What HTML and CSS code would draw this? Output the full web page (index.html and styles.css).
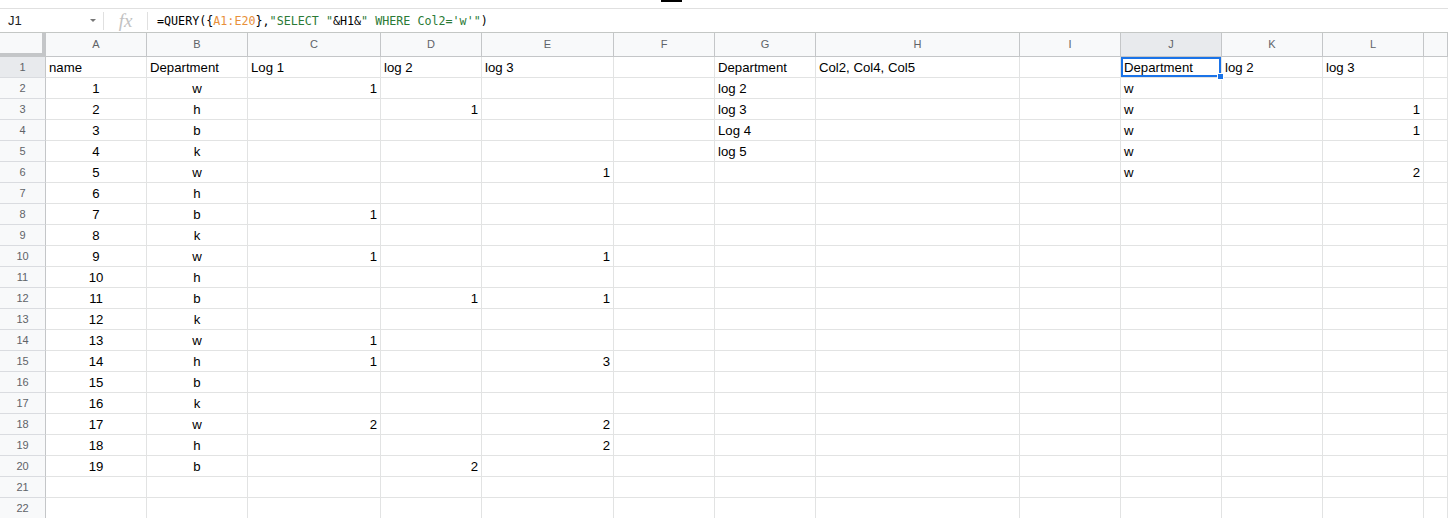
FILE: index.html
```html
<!DOCTYPE html>
<html lang="en">
<head>
<meta charset="utf-8">
<title>Sheet</title>
<link rel="stylesheet" href="styles.css">
</head>
<body>
<div class="topbar"><div class="mark"></div></div>
<div class="fbar">
  <div class="namebox"><span class="ref">J1</span><span class="caret"></span></div>
  <div class="sep"></div>
  <div class="fx">fx</div>
  <div class="sep"></div>
  <div class="formula">=QUERY({<span class="rng">A1:E20</span>},<span class="str">"SELECT "</span>&amp;H1&amp;<span class="str">" WHERE Col2='w'"</span>)</div>
</div>
<div class="sheet">
  <div class="hdr">
    <div class="corner"></div><div class="ch">A</div><div class="ch">B</div><div class="ch">C</div><div class="ch">D</div><div class="ch">E</div><div class="ch">F</div><div class="ch">G</div><div class="ch">H</div><div class="ch">I</div><div class="ch sel">J</div><div class="ch">K</div><div class="ch">L</div><div class="ch"></div>
  </div>
  <div class="r"><div class="rh sel">1</div><div class="c">name</div><div class="c">Department</div><div class="c">Log 1</div><div class="c">log 2</div><div class="c">log 3</div><div class="c"></div><div class="c">Department</div><div class="c">Col2, Col4, Col5</div><div class="c"></div><div class="c active">Department<span class="selbox"></span><span class="handle"></span></div><div class="c">log 2</div><div class="c">log 3</div><div class="c"></div></div>
  <div class="r"><div class="rh">2</div><div class="c ctr">1</div><div class="c ctr">w</div><div class="c num">1</div><div class="c"></div><div class="c"></div><div class="c"></div><div class="c">log 2</div><div class="c"></div><div class="c"></div><div class="c">w</div><div class="c"></div><div class="c"></div><div class="c"></div></div>
  <div class="r"><div class="rh">3</div><div class="c ctr">2</div><div class="c ctr">h</div><div class="c"></div><div class="c num">1</div><div class="c"></div><div class="c"></div><div class="c">log 3</div><div class="c"></div><div class="c"></div><div class="c">w</div><div class="c"></div><div class="c num">1</div><div class="c"></div></div>
  <div class="r"><div class="rh">4</div><div class="c ctr">3</div><div class="c ctr">b</div><div class="c"></div><div class="c"></div><div class="c"></div><div class="c"></div><div class="c">Log 4</div><div class="c"></div><div class="c"></div><div class="c">w</div><div class="c"></div><div class="c num">1</div><div class="c"></div></div>
  <div class="r"><div class="rh">5</div><div class="c ctr">4</div><div class="c ctr">k</div><div class="c"></div><div class="c"></div><div class="c"></div><div class="c"></div><div class="c">log 5</div><div class="c"></div><div class="c"></div><div class="c">w</div><div class="c"></div><div class="c"></div><div class="c"></div></div>
  <div class="r"><div class="rh">6</div><div class="c ctr">5</div><div class="c ctr">w</div><div class="c"></div><div class="c"></div><div class="c num">1</div><div class="c"></div><div class="c"></div><div class="c"></div><div class="c"></div><div class="c">w</div><div class="c"></div><div class="c num">2</div><div class="c"></div></div>
  <div class="r"><div class="rh">7</div><div class="c ctr">6</div><div class="c ctr">h</div><div class="c"></div><div class="c"></div><div class="c"></div><div class="c"></div><div class="c"></div><div class="c"></div><div class="c"></div><div class="c"></div><div class="c"></div><div class="c"></div><div class="c"></div></div>
  <div class="r"><div class="rh">8</div><div class="c ctr">7</div><div class="c ctr">b</div><div class="c num">1</div><div class="c"></div><div class="c"></div><div class="c"></div><div class="c"></div><div class="c"></div><div class="c"></div><div class="c"></div><div class="c"></div><div class="c"></div><div class="c"></div></div>
  <div class="r"><div class="rh">9</div><div class="c ctr">8</div><div class="c ctr">k</div><div class="c"></div><div class="c"></div><div class="c"></div><div class="c"></div><div class="c"></div><div class="c"></div><div class="c"></div><div class="c"></div><div class="c"></div><div class="c"></div><div class="c"></div></div>
  <div class="r"><div class="rh">10</div><div class="c ctr">9</div><div class="c ctr">w</div><div class="c num">1</div><div class="c"></div><div class="c num">1</div><div class="c"></div><div class="c"></div><div class="c"></div><div class="c"></div><div class="c"></div><div class="c"></div><div class="c"></div><div class="c"></div></div>
  <div class="r"><div class="rh">11</div><div class="c ctr">10</div><div class="c ctr">h</div><div class="c"></div><div class="c"></div><div class="c"></div><div class="c"></div><div class="c"></div><div class="c"></div><div class="c"></div><div class="c"></div><div class="c"></div><div class="c"></div><div class="c"></div></div>
  <div class="r"><div class="rh">12</div><div class="c ctr">11</div><div class="c ctr">b</div><div class="c"></div><div class="c num">1</div><div class="c num">1</div><div class="c"></div><div class="c"></div><div class="c"></div><div class="c"></div><div class="c"></div><div class="c"></div><div class="c"></div><div class="c"></div></div>
  <div class="r"><div class="rh">13</div><div class="c ctr">12</div><div class="c ctr">k</div><div class="c"></div><div class="c"></div><div class="c"></div><div class="c"></div><div class="c"></div><div class="c"></div><div class="c"></div><div class="c"></div><div class="c"></div><div class="c"></div><div class="c"></div></div>
  <div class="r"><div class="rh">14</div><div class="c ctr">13</div><div class="c ctr">w</div><div class="c num">1</div><div class="c"></div><div class="c"></div><div class="c"></div><div class="c"></div><div class="c"></div><div class="c"></div><div class="c"></div><div class="c"></div><div class="c"></div><div class="c"></div></div>
  <div class="r"><div class="rh">15</div><div class="c ctr">14</div><div class="c ctr">h</div><div class="c num">1</div><div class="c"></div><div class="c num">3</div><div class="c"></div><div class="c"></div><div class="c"></div><div class="c"></div><div class="c"></div><div class="c"></div><div class="c"></div><div class="c"></div></div>
  <div class="r"><div class="rh">16</div><div class="c ctr">15</div><div class="c ctr">b</div><div class="c"></div><div class="c"></div><div class="c"></div><div class="c"></div><div class="c"></div><div class="c"></div><div class="c"></div><div class="c"></div><div class="c"></div><div class="c"></div><div class="c"></div></div>
  <div class="r"><div class="rh">17</div><div class="c ctr">16</div><div class="c ctr">k</div><div class="c"></div><div class="c"></div><div class="c"></div><div class="c"></div><div class="c"></div><div class="c"></div><div class="c"></div><div class="c"></div><div class="c"></div><div class="c"></div><div class="c"></div></div>
  <div class="r"><div class="rh">18</div><div class="c ctr">17</div><div class="c ctr">w</div><div class="c num">2</div><div class="c"></div><div class="c num">2</div><div class="c"></div><div class="c"></div><div class="c"></div><div class="c"></div><div class="c"></div><div class="c"></div><div class="c"></div><div class="c"></div></div>
  <div class="r"><div class="rh">19</div><div class="c ctr">18</div><div class="c ctr">h</div><div class="c"></div><div class="c"></div><div class="c num">2</div><div class="c"></div><div class="c"></div><div class="c"></div><div class="c"></div><div class="c"></div><div class="c"></div><div class="c"></div><div class="c"></div></div>
  <div class="r"><div class="rh">20</div><div class="c ctr">19</div><div class="c ctr">b</div><div class="c"></div><div class="c num">2</div><div class="c"></div><div class="c"></div><div class="c"></div><div class="c"></div><div class="c"></div><div class="c"></div><div class="c"></div><div class="c"></div><div class="c"></div></div>
  <div class="r"><div class="rh">21</div><div class="c"></div><div class="c"></div><div class="c"></div><div class="c"></div><div class="c"></div><div class="c"></div><div class="c"></div><div class="c"></div><div class="c"></div><div class="c"></div><div class="c"></div><div class="c"></div><div class="c"></div></div>
  <div class="r"><div class="rh">22</div><div class="c"></div><div class="c"></div><div class="c"></div><div class="c"></div><div class="c"></div><div class="c"></div><div class="c"></div><div class="c"></div><div class="c"></div><div class="c"></div><div class="c"></div><div class="c"></div><div class="c"></div></div>
</div>
</body>
</html>
```
FILE: styles.css
```css
* { box-sizing: border-box; }
html, body {
  margin: 0;
  padding: 0;
  background: #fff;
  overflow: hidden;
}
body {
  width: 1448px;
  height: 518px;
  font-family: "Liberation Sans", Arial, sans-serif;
  color: #000;
}
.topbar {
  height: 9px;
  border-bottom: 1px solid #e0e0e0;
}
.mark {
  margin-left: 661px;
  width: 21px;
  height: 2px;
  background: #000;
}
.fbar {
  height: 24px;
  display: flex;
  align-items: center;
  border-bottom: 1px solid #c4c7c5;
}
.namebox {
  width: 103px;
  display: flex;
  align-items: center;
  padding-left: 8px;
  padding-right: 7px;
  font-size: 13px;
  color: #202124;
}
.caret {
  margin-left: auto;
  width: 0;
  height: 0;
  border-left: 3px solid transparent;
  border-right: 3px solid transparent;
  border-top: 3px solid #777;
}
.sep {
  width: 1px;
  height: 18px;
  background: #e0e0e0;
}
.fx {
  width: 43px;
  text-align: center;
  font-family: "Liberation Serif", "DejaVu Serif", serif;
  font-style: italic;
  font-size: 19px;
  color: #c2c2c2;
  line-height: 20px;
}
.formula {
  padding-left: 9px;
  font-family: "DejaVu Sans Mono", "Liberation Mono", monospace;
  font-size: 11.7px;
  color: #000;
  white-space: nowrap;
}
.rng { color: #e8903a; }
.str { color: #2b7a36; }
.sheet { width: 1448px; }
.hdr, .r {
  display: grid;
  grid-template-columns: 46px 101px 101px 133px 101px 132px 101px 101px 204px 101px 101px 101px 101px 1fr;
}
.corner {
  height: 24px;
  background: #f8f9fa;
  border-right: 4px solid #c4c6c8;
  border-bottom: 4px solid #c4c6c8;
}
.ch {
  height: 24px;
  background: #f8f9fa;
  border-right: 1px solid #c4c6c8;
  border-bottom: 1px solid #c4c6c8;
  text-align: center;
  font-size: 11px;
  line-height: 23px;
  color: #5f6368;
}
.ch.sel { background: #e8eaed; }
.rh {
  height: 21px;
  background: #f8f9fa;
  border-right: 1px solid #c4c6c8;
  border-bottom: 1px solid #dadce0;
  text-align: center;
  font-size: 11px;
  line-height: 21px;
  color: #5f6368;
}
.rh.sel { background: #e8eaed; }
.c {
  position: relative;
  height: 21px;
  border-right: 1px solid #e2e3e3;
  border-bottom: 1px solid #e2e3e3;
  padding: 0 3px;
  font-size: 13.2px;
  line-height: 21px;
  white-space: nowrap;
  overflow: visible;
}
.ctr { text-align: center; }
.num { text-align: right; }
.selbox {
  position: absolute;
  top: 0;
  left: 0;
  right: 0;
  bottom: 0;
  border: 2px solid #1a73e8;
  pointer-events: none;
}
.handle {
  position: absolute;
  right: -3px;
  bottom: -3px;
  width: 7px;
  height: 7px;
  background: #1a73e8;
  border: 1px solid #fff;
  z-index: 2;
}
```
